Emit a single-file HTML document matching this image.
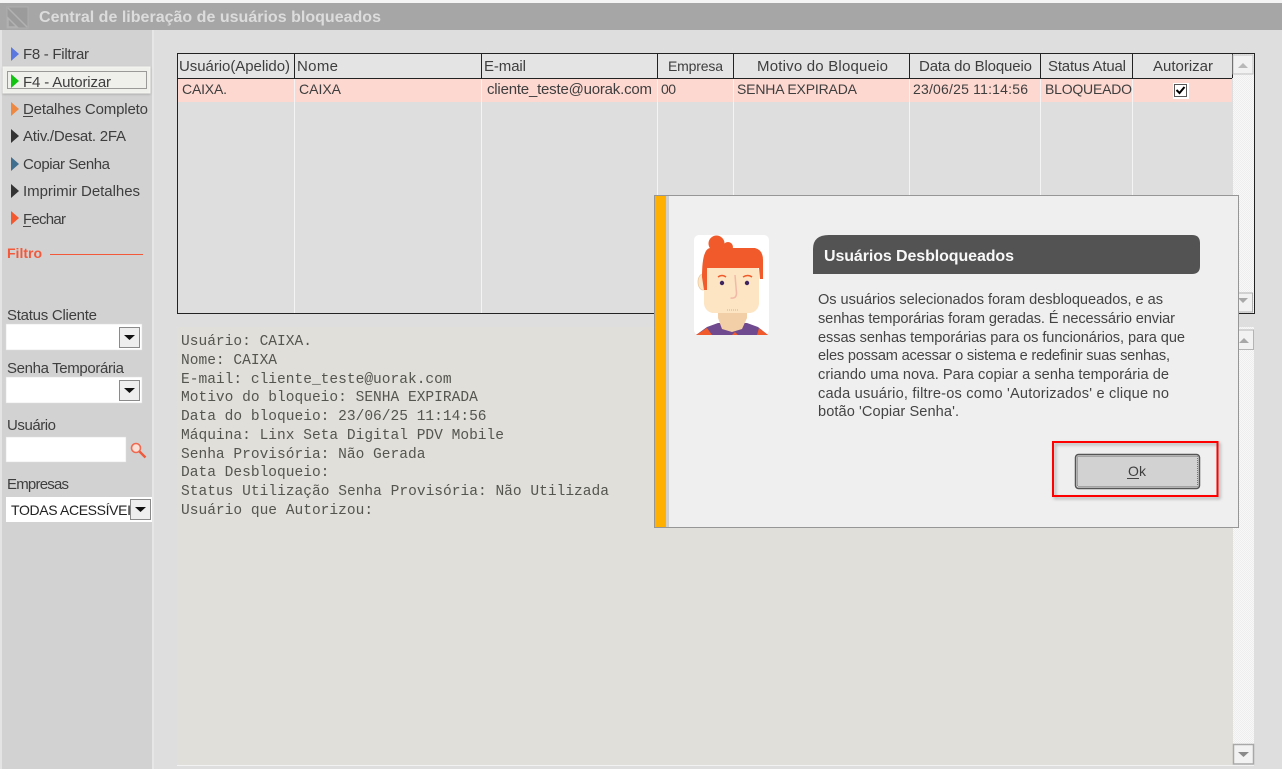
<!DOCTYPE html>
<html lang="pt-BR"><head><meta charset="utf-8"><title>Central de liberação de usuários bloqueados</title>
<style>
html,body{margin:0;padding:0;background:#fff;width:1282px;height:769px;overflow:hidden}
svg{display:block;position:absolute;left:0;top:0}
text{font-family:"Liberation Sans",sans-serif;font-size:15px;fill:#3e3e3e;white-space:pre;filter:blur(.25px)}
.m{font-family:"Liberation Mono",monospace;font-size:14.55px;fill:#55554f}
.p{font-size:14.6px;fill:#444}
.s{font-size:14px}
.b{font-weight:bold;font-size:16px}
</style></head><body>
<svg width="1282" height="769" viewBox="0 0 1282 769" xmlns="http://www.w3.org/2000/svg">
<defs>
<filter id="sh" x="-10%" y="-10%" width="120%" height="120%"><feDropShadow dx="2" dy="2" stdDeviation="1.5" flood-color="#000" flood-opacity=".3"/></filter>
<filter id="sh2" x="-10%" y="-20%" width="120%" height="140%"><feDropShadow dx="0" dy="1" stdDeviation="1" flood-color="#000" flood-opacity=".2"/></filter>
<pattern id="dith" width="2" height="2" patternUnits="userSpaceOnUse"><rect width="2" height="2" fill="#f8f8f8"/><rect width="1" height="1" fill="#eee"/><rect x="1" y="1" width="1" height="1" fill="#eee"/></pattern>
<clipPath id="c1"><rect x="6" y="497" width="124" height="25"/></clipPath>
</defs>
<!-- base -->
<rect width="1282" height="769" fill="#dedede"/>
<rect x="0" y="0" width="1282" height="3" fill="#f4f4f4"/>
<rect x="0" y="30" width="2" height="739" fill="#e4e4e4"/>
<rect x="2" y="30" width="150" height="739" fill="#d2d2d2"/>
<rect x="152" y="30" width="2" height="739" fill="#e6e6e6"/>
<!-- title -->
<rect x="0" y="3" width="1282" height="27" fill="#a6a6a6"/>
<rect x="7" y="7" width="21" height="21" fill="#9b9b9b" stroke="#aeaeae"/>
<path d="M8 8L27 27M8 18L17 27H8Z" stroke="#b2b2b2" fill="none" stroke-width="1.5"/>
<text x="39" y="22" class="b" textLength="342" style="fill:#dcdcdc">Central de liberação de usuários bloqueados</text>
<!-- sidebar menu -->
<rect x="3" y="67" width="147" height="26" fill="#efefeb" stroke="#f6f6f3" filter="url(#sh2)"/>
<rect x="7.5" y="71.5" width="139" height="17" fill="none" stroke="#444" stroke-dasharray="1 1" shape-rendering="crispEdges"/>
<path d="M11 47l8 7-8 7z" fill="#5a78e0"/><text x="23" y="59" textLength="66">F8 - Filtrar</text>
<path d="M11 74l8 7-8 7z" fill="#12c412"/><text x="23" y="87" textLength="88">F4 - Autorizar</text>
<path d="M11 102l8 7-8 7z" fill="#ee8840"/><text x="23" y="114" textLength="125">Detalhes Completo</text><rect x="23" y="116" width="10" height="1" fill="#444"/>
<path d="M11 129l8 7-8 7z" fill="#333"/><text x="23" y="141" textLength="103">Ativ./Desat. 2FA</text>
<path d="M11 157l8 7-8 7z" fill="#3f6f90"/><text x="23" y="169" textLength="87">Copiar Senha</text>
<path d="M11 184l8 7-8 7z" fill="#333"/><text x="23" y="196" textLength="117">Imprimir Detalhes</text>
<path d="M11 211l8 7-8 7z" fill="#f4582e"/><text x="23" y="224" textLength="43">Fechar</text><rect x="23" y="226" width="8" height="1" fill="#444"/>
<!-- filter -->
<text x="7" y="258" textLength="35" style="fill:#f4583a;font-size:14px;font-weight:bold">Filtro</text>
<rect x="50" y="254" width="93" height="1" fill="#f4583a"/>
<text x="7" y="320" textLength="90">Status Cliente</text>
<rect x="6" y="324" width="136" height="26" fill="#fff" stroke="#ddd" stroke-width=".5"/>
<rect x="119.500" y="327.500" width="20" height="20" fill="#eee" stroke="#8a8a8a"/><path d="M124 335h11l-5.500 5z" fill="#111"/>
<text x="7" y="373" textLength="117">Senha Temporária</text>
<rect x="6" y="377" width="136" height="26" fill="#fff" stroke="#ddd" stroke-width=".5"/>
<rect x="119.500" y="380.500" width="20" height="20" fill="#eee" stroke="#8a8a8a"/><path d="M124 388h11l-5.500 5z" fill="#111"/>
<text x="7" y="430" textLength="49">Usuário</text>
<rect x="6" y="437" width="120" height="25" fill="#fff" stroke="#ddd" stroke-width=".5"/>
<circle cx="136" cy="448" r="4.500" fill="#fbe0d8" stroke="#ef6a50" stroke-width="1.600"/><path d="M139.500 451.500l6 6" stroke="#ef5a3c" stroke-width="2.400"/>
<text x="7" y="489" textLength="62">Empresas</text>
<rect x="6" y="497" width="146" height="25" fill="#fff"/>
<g clip-path="url(#c1)"><text x="11" y="515" class="s" textLength="129" style="fill:#222">TODAS ACESSÍVEIS</text></g>
<rect x="130.500" y="499.500" width="20" height="20" fill="#eee" stroke="#8a8a8a"/><path d="M135 507h11l-5.500 5z" fill="#111"/>
<!-- grid -->
<rect x="177.500" y="53.500" width="1077" height="260" fill="#dedede" stroke="#222"/>
<rect x="178" y="54" width="1054" height="24" fill="#e4e4e4"/>
<rect x="178" y="79" width="1054" height="23" fill="#fdd8d0"/>
<g fill="#f4f4f4"><rect x="294" y="79" width="1" height="234"/><rect x="481" y="79" width="1" height="234"/><rect x="657" y="79" width="1" height="234"/><rect x="733" y="79" width="1" height="234"/><rect x="909" y="79" width="1" height="234"/><rect x="1040" y="79" width="1" height="234"/><rect x="1132" y="79" width="1" height="234"/></g>
<g fill="#222"><rect x="178" y="78" width="1054" height="1"/><rect x="294" y="54" width="1" height="24"/><rect x="481" y="54" width="1" height="24"/><rect x="657" y="54" width="1" height="24"/><rect x="733" y="54" width="1" height="24"/><rect x="909" y="54" width="1" height="24"/><rect x="1040" y="54" width="1" height="24"/><rect x="1132" y="54" width="1" height="24"/><rect x="1232" y="54" width="1" height="24"/></g>
<text x="179" y="71" textLength="111">Usuário(Apelido)</text>
<text x="297" y="71" textLength="41">Nome</text>
<text x="484" y="71" textLength="42">E-mail</text>
<text x="668" y="71" class="s" textLength="55">Empresa</text>
<text x="757" y="71" textLength="131">Motivo do Bloqueio</text>
<text x="919" y="71" textLength="113">Data do Bloqueio</text>
<text x="1048" y="71" textLength="78">Status Atual</text>
<text x="1153" y="71" textLength="60">Autorizar</text>
<text x="182" y="94" class="s" textLength="45">CAIXA.</text>
<text x="299" y="94" class="s" textLength="42">CAIXA</text>
<text x="487" y="94" textLength="165">cliente_teste@uorak.com</text>
<text x="661" y="94" class="s" textLength="15">00</text>
<text x="737" y="94" class="s" textLength="120">SENHA EXPIRADA</text>
<text x="913" y="94" class="s" textLength="115">23/06/25 11:14:56</text>
<text x="1045" y="94" class="s" textLength="87">BLOQUEADO</text>
<rect x="1173" y="83" width="16" height="16" fill="#fff"/><rect x="1174.500" y="84.500" width="12" height="12" fill="#fff" stroke="#555"/><path d="M1176.500 90l3 3 5-6" fill="none" stroke="#000" stroke-width="2"/>
<rect x="1233" y="54" width="21" height="259" fill="url(#dith)"/>
<rect x="1233" y="55" width="20" height="19" fill="#f1f1f1" stroke="#c0c0c0"/><path d="M1238 68l5-5 5 5z" fill="#b8b8b8"/>
<rect x="1233" y="293" width="19.500" height="19" fill="#f1f1f1" stroke="#b0b0b0"/><path d="M1238 298h10l-5 5z" fill="#a8a8a8"/>
<rect x="1254" y="53" width="1" height="261" fill="#222"/><rect x="177" y="313" width="1078" height="1" fill="#222"/>
<!-- memo -->
<rect x="177" y="327" width="1056" height="438" fill="#e0dfd9"/>
<rect x="1233" y="327" width="21" height="438" fill="url(#dith)"/>
<rect x="177" y="765" width="1077" height="1" fill="#f2f2f2"/>
<rect x="1235" y="330" width="18.500" height="19.500" fill="#f2f2f2" stroke="#b4b4b4"/><path d="M1239 343l5-5 5 5z" fill="#a8a8a8"/>
<rect x="1233.500" y="744.500" width="20" height="19.500" fill="#f2f2f2" stroke="#a8a8a8" stroke-width="1.500"/><path d="M1238 752h11l-5.500 5z" fill="#8a8a8a"/>
<text class="m" x="181" y="345">Usuário: CAIXA.</text>
<text class="m" x="181" y="364">Nome: CAIXA</text>
<text class="m" x="181" y="383">E-mail: cliente_teste@uorak.com</text>
<text class="m" x="181" y="401">Motivo do bloqueio: SENHA EXPIRADA</text>
<text class="m" x="181" y="420">Data do bloqueio: 23/06/25 11:14:56</text>
<text class="m" x="181" y="439">Máquina: Linx Seta Digital PDV Mobile</text>
<text class="m" x="181" y="458">Senha Provisória: Não Gerada</text>
<text class="m" x="181" y="476">Data Desbloqueio:</text>
<text class="m" x="181" y="495" textLength="428">Status Utilização Senha Provisória: Não Utilizada</text>
<text class="m" x="181" y="514">Usuário que Autorizou:</text>
<!-- dialog -->
<rect x="654.500" y="195.500" width="584" height="332" fill="#efefef" stroke="#969696"/>
<rect x="655" y="196" width="11" height="331" fill="#ffb000"/>
<rect x="666" y="196" width="3" height="331" fill="#cfcfcf"/>
<!-- avatar -->
<rect x="694" y="235" width="75" height="100" rx="5" fill="#fff"/>
<path d="M696 335l11-8 11-4h29l11 4 10 8z" fill="#6f4a8e"/>
<path d="M696 335l11-7 5 7zM757 335l11 0-9-7zM732 335l3-3 3 3z" fill="#f15a2b"/>
<path d="M718 312h29v6l-5 11-10 3-10-3-4-11z" fill="#f2cfa6"/>
<ellipse cx="703" cy="282" rx="5" ry="8" fill="#fde4c2" stroke="#e8c9a0" stroke-width=".8"/>
<rect x="704" y="262" width="55" height="51" rx="10" fill="#fde4c2"/>
<path d="M702 277q0-28 8-29h45q8 2 8 12v19h-3l-1-11h-52v22h-3l-2-13z" fill="#f15a2b"/>
<circle cx="716.500" cy="243.500" r="8" fill="#f15a2b"/><circle cx="728" cy="247" r="5" fill="#f15a2b"/>
<path d="M718 250h15v2h-15z" fill="#f15a2b"/>
<path d="M718 277q4-3 8 0M743 277q5-3 9 0" stroke="#f15a2b" stroke-width="1.500" fill="none"/>
<circle cx="722" cy="283" r="2.200" fill="#3e2560"/><circle cx="747" cy="283" r="2.200" fill="#3e2560"/>
<path d="M735 275l1.500 18q0 6-6 5" stroke="#f2b9a8" stroke-width="1.500" fill="none"/>
<path d="M727 310h12" stroke="#f2b9a8" stroke-width="1.500" stroke-dasharray="1 1"/>
<!-- heading -->
<path d="M813 274v-25q0-14 16-14h363q8 0 8 8v23q0 8-8 8z" fill="#535353"/>
<text x="824" y="261" textLength="190" class="b" style="fill:#f8f8f8">Usuários Desbloqueados</text>
<text class="p" x="818" y="304" textLength="345">Os usuários selecionados foram desbloqueados, e as</text>
<text class="p" x="818" y="323" textLength="357">senhas temporárias foram geradas. É necessário enviar</text>
<text class="p" x="818" y="342" textLength="367">essas senhas temporárias para os funcionários, para que</text>
<text class="p" x="818" y="360" textLength="352">eles possam acessar o sistema e redefinir suas senhas,</text>
<text class="p" x="818" y="379" textLength="351">criando uma nova. Para copiar a senha temporária de</text>
<text class="p" x="818" y="398" textLength="351">cada usuário, filtre-os como 'Autorizados' e clique no</text>
<text class="p" x="818" y="416" textLength="141">botão 'Copiar Senha'.</text>
<!-- red box + button -->
<rect x="1053" y="442" width="164.500" height="54" fill="none" stroke="#f00" stroke-width="2" filter="url(#sh)"/>
<rect x="1075.500" y="454.500" width="124" height="34" rx="3" fill="#d2d2d2" stroke="#555" stroke-width="1.500"/>
<rect x="1077.500" y="456.500" width="120" height="30" rx="1" fill="none" stroke="#777" stroke-dasharray="1 1" shape-rendering="crispEdges"/>
<text x="1128" y="476" class="s" textLength="18">Ok</text><rect x="1127" y="478" width="12" height="1" fill="#444"/>
</svg>
</body></html>
